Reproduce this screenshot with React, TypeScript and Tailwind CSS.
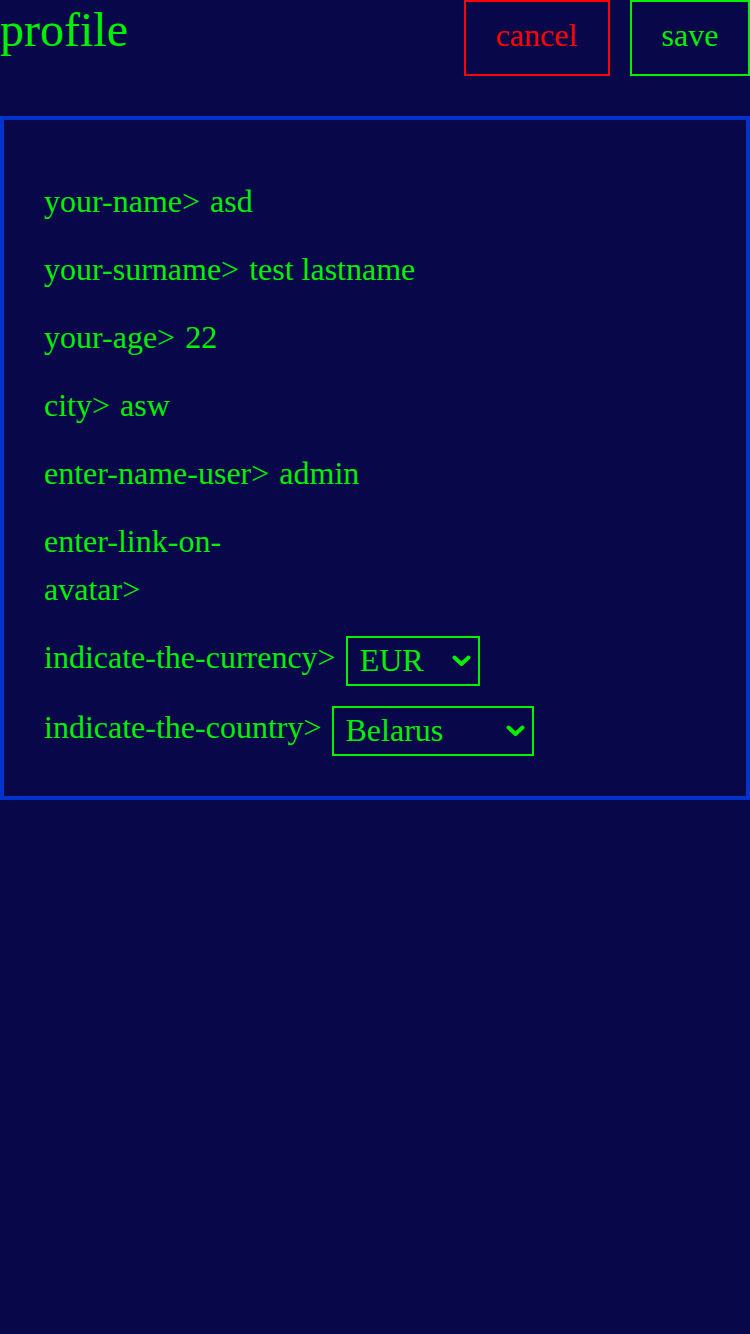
import React from "react";

const Chevron = () => (
  <svg width="19" height="12" viewBox="0 0 19 12" className="pointer-events-none absolute top-1/2 -translate-y-1/2 right-[7px]">
    <polyline points="2.5,2.5 9.5,9 16.5,2.5" fill="none" stroke="#00f000" strokeWidth="4" strokeLinecap="round" strokeLinejoin="round" />
  </svg>
);

function Select({ value, width, ml, pl }: { value: string; width: string; ml: string; pl: string }) {
  return (
    <div
      role="combobox"
      className={`relative mt-[3px] flex h-[50px] items-center border-2 border-[#00f000] pb-[3px] ${pl} ${ml} ${width}`}
    >
      <span className="text-[32px] leading-normal">{value}</span>
      <Chevron />
    </div>
  );
}

const rows: { label: string; value: string }[] = [
  { label: "your-name>", value: "asd" },
  { label: "your-surname>", value: "test lastname" },
  { label: "your-age>", value: "22" },
  { label: "city>", value: "asw" },
  { label: "enter-name-user>", value: "admin" },
];

export default function App() {
  return (
    <div
      className="min-h-screen bg-[#08074a] text-[#00f000]"
      style={{ fontFamily: '"Liberation Serif", "Times New Roman", serif' }}
    >
      <header className="flex items-start justify-between">
        <h1 className="mt-[3px] text-[48px] leading-[53px] font-normal">profile</h1>
        <div className="flex gap-5">
          <button className="w-[146px] border-2 border-[#ff0000] pt-[9px] pb-[15px] pr-[1px] text-center text-[32px] leading-[48px] text-[#ff0000]">
            cancel
          </button>
          <button className="w-[120px] border-2 border-[#00f000] pt-[9px] pb-[15px] text-center text-[32px] leading-[48px] text-[#00f000]">
            save
          </button>
        </div>
      </header>

      <section className="mt-10 border-4 border-[#0033cc] px-10 pt-[57px] pb-10 text-[32px] leading-[48px]">
        <div className="flex flex-col gap-5">
          {rows.map((r) => (
            <div key={r.label} className="flex">
              <span>{r.label}</span>
              <span className="ml-[10px]">{r.value}</span>
            </div>
          ))}
          <div className="flex">
            <span className="max-w-[200px]">enter-link-on-avatar&gt;</span>
          </div>
          <div className="flex items-start">
            <span>indicate-the-currency&gt;</span>
            <Select value="EUR" width="w-[134px]" ml="ml-[10px]" pl="pl-[12px]" />
          </div>
        </div>
        <div className="mt-[17px] flex items-start">
          <span>indicate-the-country&gt;</span>
          <Select value="Belarus" width="w-[202px]" ml="ml-[11px]" pl="pl-[11px]" />
        </div>
      </section>
    </div>
  );
}
